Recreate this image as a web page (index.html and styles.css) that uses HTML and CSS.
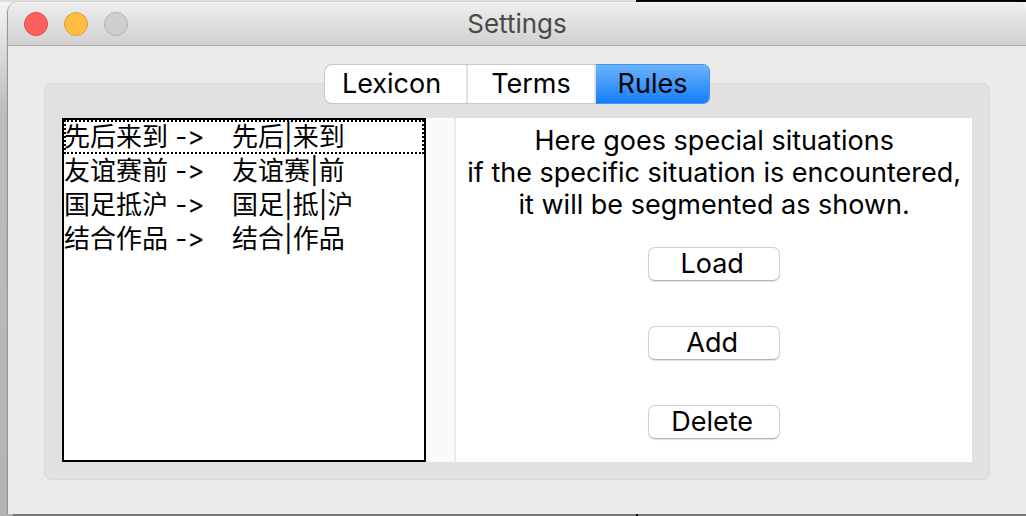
FILE: index.html
```html
<!DOCTYPE html>
<html lang="en">
<head>
<meta charset="utf-8">
<title>Settings</title>
<link rel="stylesheet" href="styles.css">
</head>
<body class="desktop">
<main class="window">
  <header class="titlebar">
    <div class="lights">
      <button class="light light-close" aria-label="Close"></button>
      <button class="light light-minimize" aria-label="Minimize"></button>
      <button class="light light-zoom" aria-label="Zoom" disabled></button>
    </div>
    <h1 class="title">Settings</h1>
  </header>
  <div class="content">
    <div class="tabs" role="tablist">
      <button class="tab tab-lexicon" role="tab" aria-selected="false">Lexicon</button>
      <button class="tab tab-terms" role="tab" aria-selected="false">Terms</button>
      <button class="tab tab-rules" role="tab" aria-selected="true">Rules</button>
    </div>
    <section class="pane" role="tabpanel" aria-label="Rules">
      <ul class="rules" role="listbox" aria-label="Rules" lang="zh-CN">
        <li class="rule rule-active" role="option"><span class="source">先后来到 -&gt;</span><span>先后|来到</span></li>
        <li class="rule" role="option"><span class="source">友谊赛前 -&gt;</span><span>友谊赛|前</span></li>
        <li class="rule" role="option"><span class="source">国足抵沪 -&gt;</span><span>国足|抵|沪</span></li>
        <li class="rule" role="option"><span class="source">结合作品 -&gt;</span><span>结合|作品</span></li>
      </ul>
      <div class="scroll-track"></div>
      <div class="side">
        <p class="hint">Here goes special situations<br>if the specific situation is encountered,<br>it will be segmented as shown.</p>
        <div class="actions">
          <button class="push">Load</button>
          <button class="push">Add</button>
          <button class="push">Delete</button>
        </div>
      </div>
    </section>
  </div>
</main>
</body>
</html>
```
FILE: styles.css
```css
* {
  box-sizing: border-box;
}

.desktop {
  display: flex;
  min-height: 100vh;
  margin: 0;
  padding: 2px 0 2px 8px;
  background:
    linear-gradient(90deg, #dedede 636px, #000 636px) top / 100% 2px no-repeat,
    linear-gradient(90deg, #b4b4b4 12px, #757575 14px, #757575 636px, #000 636px, #000 638px, #757575 638px) bottom / 100% 2px no-repeat,
    linear-gradient(#f5f5f5, #bdbdbd 110px, #b4b4b4);
  color: #000;
  font-family: Inter, "Noto Sans CJK SC", sans-serif;
  font-size: 27px;
}

.window {
  display: flex;
  flex: 1;
  flex-direction: column;
  border-radius: 10px 10px 0 0;
  background: #ebebeb;
  box-shadow: -1px 0 1px #909090;
}

.titlebar {
  display: grid;
  grid-template-columns: 1fr auto 1fr;
  align-items: center;
  height: 44px;
  padding: 0 16px;
  border-top: 1px solid #f5f5f5;
  border-bottom: 1px solid #adadad;
  border-radius: 10px 10px 0 0;
  background: linear-gradient(#eee, #d1d1d1);
}

.lights {
  display: flex;
  gap: 16px;
}

.light {
  width: 24px;
  height: 24px;
  padding: 0;
  border: 1px solid;
  border-radius: 50%;
}

.light-close {
  border-color: #df4744;
  background: #fc615d;
}

.light-minimize {
  border-color: #de9f34;
  background: #fdbd41;
}

.light-zoom {
  border-color: #b0b0b0;
  background: #cfcfcf;
}

.title {
  margin: 0;
  color: #4a4a4a;
  font-size: 26px;
  font-weight: 400;
  line-height: 32px;
}

.content {
  display: flex;
  flex: 1;
  flex-direction: column;
  padding: 19px 36px 34px;
}

.tabs {
  z-index: 1;
  display: flex;
  align-self: center;
  margin-bottom: -20px;
  border-radius: 7px;
  background: #fff;
  box-shadow: 0 0 0 1px #c8c8c8, 0 1px 1px #a8a8a8;
}

.tab {
  height: 38px;
  padding: 0;
  border: 0;
  border-right: 2px solid #e1e1e1;
  background: none;
  color: #000;
  font: inherit;
  line-height: 38px;
}

.tab-lexicon {
  width: 143px;
  padding-right: 8px;
}

.tab-terms {
  width: 128px;
}

.tab-rules {
  width: 113px;
  border: 0;
  border-radius: 0 6px 6px 0;
  background: linear-gradient(#6cb3fa, #147efd);
  box-shadow: 0 0 0 1px #3f94f5;
  clip-path: inset(-1px -1px -1px 0);
}

.pane {
  display: flex;
  flex: 1;
  padding: 34px 17px 17px;
  border: 1px solid #d9d9d9;
  border-radius: 7px;
  background: #e1e1e1;
}

.rules {
  flex: 362 1 0;
  margin: 0;
  padding: 0;
  border: 2px solid #000;
  background: #fff;
  font-size: 26px;
  font-feature-settings: "calt" 0;
  list-style: none;
}

.rule {
  display: flex;
  height: 34px;
  border: 2px solid transparent;
  border-left-width: 0;
  line-height: 30px;
}

.rule-active {
  outline: 2px dotted #000;
  outline-offset: -2px;
}

.source {
  width: 168px;
}

.scroll-track {
  width: 30px;
  border-right: 2px solid #ebebeb;
  background: #fafafa;
}

.side {
  flex: 518 1 0;
  padding-top: 7px;
  background: #fff;
}

.hint {
  margin: 0;
  line-height: 32px;
  text-align: center;
  white-space: nowrap;
}

.actions {
  display: flex;
  flex-direction: column;
  align-items: center;
  gap: 45px;
  padding-top: 26px;
}

.push {
  width: 132px;
  height: 34px;
  padding: 0 4px 0 0;
  border: 1px solid #d0d0d0;
  border-bottom-color: #b5b5b5;
  border-radius: 7px;
  background: #fff;
  box-shadow: 0 1px 1px #e4e4e4;
  color: #000;
  font: inherit;
  line-height: 32px;
}
```
